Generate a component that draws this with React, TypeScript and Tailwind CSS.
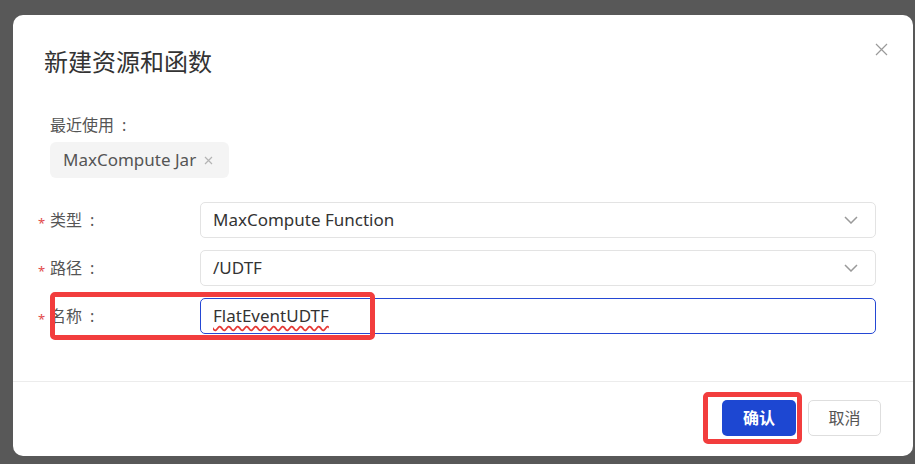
import React from 'react';

const font = "font-['Noto_Sans','Noto_Sans_CJK_SC',sans-serif]";

const ChevronDown: React.FC = () => (
  <svg width="14" height="8" viewBox="0 0 14 8" fill="none" stroke="#9a9a9a" strokeWidth="1.5">
    <path d="M1 1l6 6 6-6" />
  </svg>
);

const CloseIcon: React.FC = () => (
  <svg width="13" height="13" viewBox="0 0 13 13" fill="none" stroke="#9a9a9a" strokeWidth="1.2">
    <path d="M1 1l11 11M12 1L1 12" />
  </svg>
);

const SmallX: React.FC = () => (
  <svg width="9" height="9" viewBox="0 0 9 9" fill="none" stroke="#b4b4b4" strokeWidth="1.2">
    <path d="M1 1l7 7M8 1L1 8" />
  </svg>
);

const FieldLabel: React.FC<{ text: string }> = ({ text }) => (
  <div className="relative w-[150px] shrink-0 text-[16px] leading-6 text-[#555]">
    <span className="absolute -left-[12px] top-[3px] text-[13px] text-[#e24a4a]">*</span>
    {text}
    <span className="ml-[8px]">:</span>
  </div>
);

const SelectField: React.FC<{ label: string; value: string }> = ({ label, value }) => (
  <div className="flex items-center">
    <FieldLabel text={label} />
    <div className="flex h-9 flex-1 items-center justify-between rounded-[5px] border border-[#e3e3e3] bg-white pl-3 pr-[17px]">
      <span className="text-[17px] text-[#333]">{value}</span>
      <ChevronDown />
    </div>
  </div>
);

export default function App() {
  return (
    <div className={`h-[464px] w-[915px] overflow-hidden bg-[#585858] pl-[13px] pt-[15px] ${font}`}>
      <div className="relative flex h-[441px] w-[900px] flex-col rounded-[10px] bg-white">
        <button className="absolute right-[25px] top-[28px]">
          <CloseIcon />
        </button>

        <div className="flex-1 border-b border-[#ececec] px-[37px]">
          <h2 className="-ml-[6px] mt-[31px] text-[24px] leading-8 text-[#333]">新建资源和函数</h2>

          <div className="mt-[35px] text-[16px] leading-6 text-[#555]">
            最近使用<span className="ml-[8px]">:</span>
          </div>
          <div className="mt-[5px] inline-flex h-9 items-center gap-[8px] rounded-[6px] bg-[#f4f4f4] pl-[13px] pr-[16px]">
            <span className="text-[17px] text-[#555]">MaxCompute Jar</span>
            <SmallX />
          </div>

          <div className="mt-[24px] flex flex-col gap-3">
            <SelectField label="类型" value="MaxCompute Function" />
            <SelectField label="路径" value="/UDTF" />
            <div className="relative flex items-center">
              <FieldLabel text="名称" />
              <div className="flex h-9 flex-1 items-center rounded-[5px] border border-[#2447d4] bg-white pl-3">
                <span className="text-[17px] text-[#333] underline decoration-[#e53935] decoration-wavy underline-offset-[3px]">
                  FlatEventUDTF
                </span>
              </div>
              <div className="pointer-events-none absolute -top-[6px] left-0 h-[48px] w-[325px] rounded-[5px] border-[5px] border-[#f23d3d]" />
            </div>
          </div>
        </div>

        <div className="flex h-[74px] shrink-0 items-start justify-end gap-3 pr-[32px] pt-[18px]">
          <div className="relative">
            <button className="h-9 w-[74px] rounded-[5px] bg-[#1d47d2] text-[16px] font-bold text-white">确认</button>
            <div className="pointer-events-none absolute -left-[19px] -top-[8px] h-[52px] w-[99px] rounded-[5px] border-[5px] border-[#f23d3d]" />
          </div>
          <button className="h-9 w-[73px] rounded-[5px] border border-[#dedede] bg-white text-[16px] text-[#555]">取消</button>
        </div>
      </div>
    </div>
  );
}
